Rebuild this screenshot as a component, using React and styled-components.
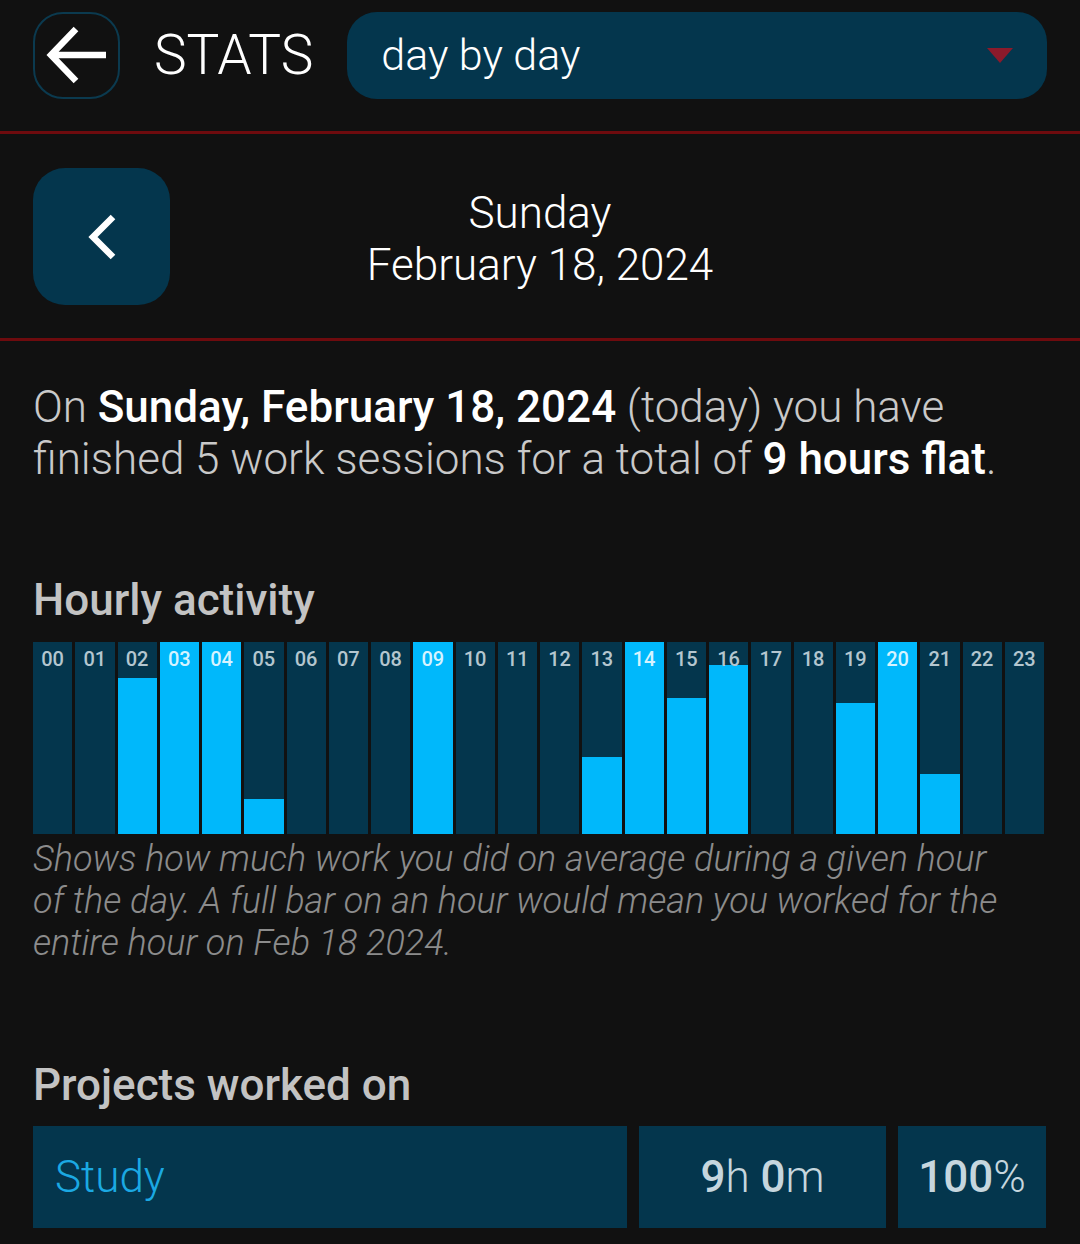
import styled, { createGlobalStyle } from 'styled-components'

const GlobalStyle = createGlobalStyle`
    body {
        margin: 0;
        background-color: #111111;
        font-family: Roboto, "Noto Sans", sans-serif;
    }
`

const colors = {
    bg: '#111111',
    panel: '#04364d',
    bar: '#00b8fb',
    rule: '#6e0b0e',
    text: '#c9c9c9',
}

const hours = [0, 0, 0.81, 1, 1, 0.18, 0, 0, 0, 1, 0, 0, 0, 0.4, 1, 0.71, 0.88, 0, 0, 0.68, 1, 0.31, 0, 0]

const Page = styled('div')`
    width: 1080px;
    color: ${colors.text};
`

const TopBar = styled('header')`
    display: flex;
    align-items: center;
    height: 134px;
    padding: 0 33px 21px;
    box-sizing: border-box;
    border-bottom: 3px solid ${colors.rule};
`

const RoundButton = styled('button')`
    width: 87px;
    height: 87px;
    flex: none;
    display: flex;
    align-items: center;
    justify-content: center;
    background: transparent;
    border: 2px solid #0b3a4f;
    border-radius: 30px;
    padding: 0;
`

const Title = styled('h1')`
    margin: 0 34px 0 34px;
    font-size: 55px;
    font-weight: 300;
    color: #ffffff;
`

const Select = styled('div')`
    flex: 1;
    height: 87px;
    display: flex;
    align-items: center;
    justify-content: space-between;
    padding: 0 34px;
    background-color: ${colors.panel};
    border-radius: 30px;
    font-size: 43px;
    font-weight: 300;
    color: #ffffff;
`

const DateBar = styled('section')`
    display: grid;
    grid-template-columns: 137px 1fr 137px;
    align-items: center;
    padding: 34px 33px 33px;
    border-bottom: 3px solid ${colors.rule};
`

const NavButton = styled('button')`
    width: 137px;
    height: 137px;
    display: flex;
    align-items: center;
    justify-content: center;
    background-color: ${colors.panel};
    border: none;
    border-radius: 32px;
    padding: 0;
`

const DateText = styled('div')`
    padding-top: 4px;
    text-align: center;
    font-size: 44px;
    font-weight: 300;
    line-height: 52px;
    color: #ffffff;
`

const Body = styled('main')`
    padding: 40px 33px 0;
`

const Summary = styled('p')`
    margin: 0;
    font-size: 44px;
    font-weight: 300;
    line-height: 52px;
    b {
        font-weight: 500;
        color: #ffffff;
    }
`

const SectionTitle = styled('h2')`
    margin: ${(p) => p.$top}px 0 ${(p) => p.$bottom}px;
    font-size: 44px;
    font-weight: 500;
    color: #c3c3c3;
    line-height: 50px;
`

const Chart = styled('div')`
    display: grid;
    grid-template-columns: repeat(24, 1fr);
    column-gap: 3px;
    width: 1011px;
    height: 192px;
`

const Column = styled('div')`
    position: relative;
    background-color: ${colors.panel};
    display: flex;
    align-items: flex-end;
`

const Fill = styled('div')`
    width: 100%;
    background-color: ${colors.bar};
`

const HourLabel = styled('span')`
    position: absolute;
    top: 5px;
    left: 0;
    right: 0;
    text-align: center;
    font-size: 20px;
    font-weight: 500;
    color: ${(p) => (p.$lit ? '#d6f3ff' : '#b4c6cf')};
`

const Caption = styled('p')`
    width: 985px;
    margin: 4px 0 0;
    font-size: 36px;
    font-weight: 300;
    font-style: italic;
    line-height: 42px;
    color: #8c8c8c;
`

const ProjectRow = styled('div')`
    display: grid;
    grid-template-columns: 594px 247px 148px;
    column-gap: 12px;
    height: 102px;
`

const Cell = styled('div')`
    display: flex;
    align-items: center;
    justify-content: ${(p) => (p.$left ? 'flex-start' : 'center')};
    padding: 0 22px;
    background-color: ${colors.panel};
    font-size: 44px;
    font-weight: 300;
    color: ${(p) => (p.$left ? '#1ba9e3' : '#c6d6de')};
    white-space: pre;
    b {
        font-weight: 500;
    }
`

function BackArrow() {
    return (
        <svg width="62" height="58" viewBox="0 0 62 58">
            <path d="M30 3 L5 29 L30 55 M5 29 H60" fill="none" stroke="#ffffff" strokeWidth="6.5" />
        </svg>
    )
}

function Chevron() {
    return (
        <svg width="34" height="48" viewBox="0 0 34 48">
            <path d="M28 4 L8 24 L28 44" fill="none" stroke="#ffffff" strokeWidth="6.5" />
        </svg>
    )
}

function Caret() {
    return (
        <svg width="26" height="15" viewBox="0 0 26 15">
            <path d="M0 0 H26 L13 15 Z" fill="#8b1a2b" />
        </svg>
    )
}

function App() {
    return (
        <Page>
            <GlobalStyle />
            <TopBar>
                <RoundButton>
                    <BackArrow />
                </RoundButton>
                <Title>STATS</Title>
                <Select>
                    <span>day by day</span>
                    <Caret />
                </Select>
            </TopBar>
            <DateBar>
                <NavButton>
                    <Chevron />
                </NavButton>
                <DateText>
                    Sunday
                    <br />
                    February 18, 2024
                </DateText>
            </DateBar>
            <Body>
                <Summary>
                    On <b>Sunday, February 18, 2024</b> (today) you have finished 5 work
                    sessions for a total of <b>9 hours flat</b>.
                </Summary>
                <SectionTitle $top={90} $bottom={17}>
                    Hourly activity
                </SectionTitle>
                <Chart>
                    {hours.map((value, hour) => (
                        <Column key={hour}>
                            <Fill style={{ height: `${value * 100}%` }} />
                            <HourLabel $lit={value === 1}>{String(hour).padStart(2, '0')}</HourLabel>
                        </Column>
                    ))}
                </Chart>
                <Caption>
                    Shows how much work you did on average during a given hour of the day. A full
                    bar on an hour would mean you worked for the entire hour on Feb 18 2024.
                </Caption>
                <SectionTitle $top={96} $bottom={16}>
                    Projects worked on
                </SectionTitle>
                <ProjectRow>
                    <Cell $left>Study</Cell>
                    <Cell>
                        <b>9</b>
                        {'h '}
                        <b>0</b>m
                    </Cell>
                    <Cell>
                        <b>100</b>%
                    </Cell>
                </ProjectRow>
            </Body>
        </Page>
    )
}

export default App
